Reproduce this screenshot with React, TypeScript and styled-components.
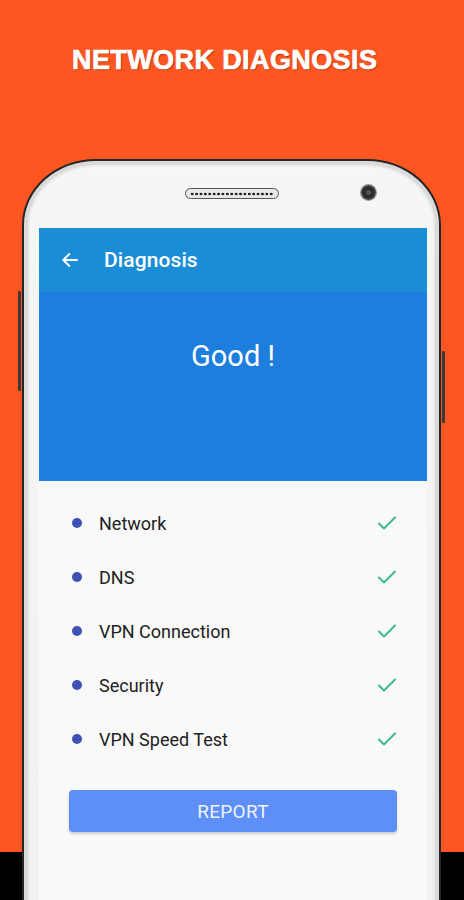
import React from 'react';
import styled, { createGlobalStyle } from 'styled-components';

const GlobalStyle = createGlobalStyle`
  html, body {
    margin: 0;
    padding: 0;
    background: #000;
  }
  body {
    font-family: Roboto, "Noto Sans", sans-serif;
  }
`

const Page = styled.div`
  width: 464px;
  height: 900px;
  overflow: hidden;
  background: linear-gradient(to bottom, #fe5621 0, #fe5621 852px, #000 852px);
  display: flex;
  flex-direction: column;
`

const Title = styled.h1`
  margin: 0;
  padding: 45px 0 0 72px;
  height: 159px;
  flex-shrink: 0;
  box-sizing: border-box;
  font-family: "Liberation Sans", Arial, sans-serif;
  font-weight: 900;
  font-size: 27px;
  letter-spacing: 0.4px;
  color: #fff;
  -webkit-text-stroke: 0.7px #fff;
  text-shadow: 1px 1px 1px rgba(80, 20, 0, 0.6);
  line-height: 30px;
`

// phone runs past the bottom of the page, like the mockup
const Phone = styled.div`
  position: relative;
  margin-left: 22px;
  width: 419px;
  height: 780px;
  flex-shrink: 0;
  box-sizing: border-box;
  border: 2px solid #262626;
  border-bottom: none;
  border-radius: 74px 74px 0 0 / 66px 66px 0 0;
  background: linear-gradient(to bottom, #f6f6f6, #f1f1f1);
  box-shadow: inset 0 0 0 4px #dadada, inset 0 0 0 6px #ececec;
  padding: 0 12px 0 15px;
  display: flex;
  flex-direction: column;
`

const SideKey = styled.div<{ side: 'left' | 'right'; top: number; height: number }>`
  position: absolute;
  ${p => p.side === 'left' ? 'left: -6px;' : 'right: -6px;'}
  top: ${p => p.top}px;
  height: ${p => p.height}px;
  width: 3px;
  background: #3a3a3a;
  border-radius: 1px;
`

const TopBezel = styled.div`
  height: 67px;
  flex-shrink: 0;
  position: relative;
`

const Speaker = styled.div`
  position: absolute;
  left: 146px;
  top: 27px;
  width: 94px;
  height: 11px;
  box-sizing: border-box;
  border: 1.5px solid #555;
  border-radius: 6px;
  background: #e8e8e8;
  display: flex;
  align-items: center;
  justify-content: center;
  overflow: hidden;
`

const SpeakerDots = styled.div`
  width: 84px;
  height: 4px;
  background-image: radial-gradient(circle, #222 1.2px, transparent 1.6px);
  background-size: 4.4px 4px;
`

const Camera = styled.div`
  position: absolute;
  left: 322px;
  top: 24px;
  width: 15px;
  height: 15px;
  border-radius: 50%;
  background: radial-gradient(circle, #555 0, #555 2px, #2a2a2a 3px, #2a2a2a 5px, #444 7px);
  box-shadow: 0 0 0 1px #999;
`

const Screen = styled.div`
  width: 388px;
  flex: 1;
  background: #f9f9f9;
  display: flex;
  flex-direction: column;
`

const AppBar = styled.div`
  height: 64px;
  flex-shrink: 0;
  background: #1b8dd6;
  display: flex;
  align-items: center;
  padding-left: 20px;
  color: #fff;
`

const BackButton = styled.div`
  width: 22px;
  height: 22px;
  display: flex;
  align-items: center;
  justify-content: center;
  margin-right: 23px;
`

const AppBarTitle = styled.span`
  font-family: Roboto, sans-serif;
  font-weight: 500;
  font-size: 21px;
  letter-spacing: 0.1px;
`

const Hero = styled.div`
  height: 189px;
  flex-shrink: 0;
  background: #1e7ede;
  display: flex;
  justify-content: center;
  padding-top: 47px;
  box-sizing: border-box;
`

const HeroText = styled.div`
  font-family: Roboto, sans-serif;
  font-size: 29px;
  color: #fff;
  line-height: 34px;
`

const CheckList = styled.ul`
  list-style: none;
  margin: 0;
  padding: 15px 30px 0 33px;
`

const CheckItem = styled.li`
  height: 54px;
  display: flex;
  align-items: center;
`

const Bullet = styled.span`
  width: 10px;
  height: 10px;
  border-radius: 50%;
  background: #3f51b5;
  margin-right: 17px;
`

const ItemLabel = styled.span`
  flex: 1;
  font-family: Roboto, sans-serif;
  font-size: 18px;
  color: #212121;
`

const ReportButton = styled.button`
  margin: 24px 30px 0;
  height: 42px;
  flex-shrink: 0;
  border: none;
  border-radius: 4px;
  background: #5e8ff6;
  color: #eef3ff;
  font-family: Roboto, sans-serif;
  font-size: 19px;
  letter-spacing: 0.3px;
  box-shadow: 0 2px 3px rgba(0, 0, 0, 0.18);
`

const BackArrow = () => (
  <svg width="20" height="20" viewBox="0 0 24 24" fill="none" stroke="#fff" strokeWidth="2.4" strokeLinecap="square">
    <path d="M20 12H5" />
    <path d="M11 5l-7 7 7 7" />
  </svg>
)

const Check = () => (
  <svg width="20" height="16" viewBox="0 0 20 16" fill="none" stroke="#3dba86" strokeWidth="2" strokeLinecap="round" strokeLinejoin="round">
    <path d="M2 8.5l5 5L18 2.5" />
  </svg>
)

const items = ['Network', 'DNS', 'VPN Connection', 'Security', 'VPN Speed Test'];

const App = () => {
  return (
    <Page>
      <GlobalStyle />
      <Title>NETWORK DIAGNOSIS</Title>
      <Phone>
        <SideKey side='left' top={130} height={100} />
        <SideKey side='right' top={190} height={72} />
        <TopBezel>
          <Speaker><SpeakerDots /></Speaker>
          <Camera />
        </TopBezel>
        <Screen>
          <AppBar>
            <BackButton><BackArrow /></BackButton>
            <AppBarTitle>Diagnosis</AppBarTitle>
          </AppBar>
          <Hero>
            <HeroText>Good !</HeroText>
          </Hero>
          <CheckList>
            {items.map(item => (
              <CheckItem key={item}>
                <Bullet />
                <ItemLabel>{item}</ItemLabel>
                <Check />
              </CheckItem>
            ))}
          </CheckList>
          <ReportButton>REPORT</ReportButton>
        </Screen>
      </Phone>
    </Page>
  );
}

export default App;
